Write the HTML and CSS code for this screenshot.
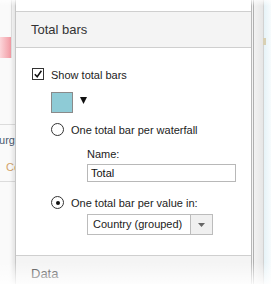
FILE: index.html
```html
<!DOCTYPE html>
<html>
<head>
<meta charset="utf-8">
<link rel="stylesheet" href="styles.css">
</head>
<body>
<div class="screen">
  <div class="backdrop-left">
    <div class="bl-top"><div class="bar-pink"></div></div>
    <div class="bl-row bl-row-1"><span class="bl-text bl-blue">Luxemburg</span></div>
    <div class="bl-row bl-row-2"><span class="bl-text bl-orange">Country</span></div>
  </div>

  <div class="panel">
    <div class="panel-top"></div>
    <div class="section-head">Total bars</div>
    <div class="section-body">
      <div class="check-row">
        <span class="checkbox"><svg width="10" height="10" viewBox="0 0 10 10"><path d="M1.8 5.2 L4.2 7.8 L8.4 1.8" fill="none" stroke="#111" stroke-width="1.5"/></svg></span>
        <span class="label">Show total bars</span>
      </div>
      <div class="swatch-row">
        <span class="swatch"></span>
        <svg class="caret" width="7" height="7" viewBox="0 0 7 7"><path d="M0 0 H7 L3.5 7 Z" fill="#111"/></svg>
      </div>
      <div class="radio-row">
        <span class="radio"></span>
        <span class="label">One total bar per waterfall</span>
      </div>
      <div class="name-label">Name:</div>
      <div class="text-input">Total</div>
      <div class="radio-row radio-row-2">
        <span class="radio radio-checked"><span class="radio-dot"></span></span>
        <span class="label">One total bar per value in:</span>
      </div>
      <div class="select">
        <span class="select-value">Country (grouped)</span>
        <span class="select-btn"><svg width="7" height="4" viewBox="0 0 7 4"><path d="M0 0 H7 L3.5 4 Z" fill="#666"/></svg></span>
      </div>
    </div>
    <div class="section-head section-data">Data</div>
  </div>

  <div class="backdrop-right">
    <div class="br-gap"></div>
    <div class="br-line"></div>
    <div class="br-strip"></div>
    <div class="br-line2"></div>
    <div class="br-blue"><div class="br-handle"></div></div>
  </div>
</div>
</body>
</html>
```
FILE: styles.css
```css
* { box-sizing: border-box; }
html, body { margin: 0; padding: 0; background: #fff; }
body {
  font-family: "Liberation Sans", Arial, sans-serif;
  font-size: 11px;
  color: #222;
}
.screen {
  position: relative;
  display: flex;
  width: 271px;
  height: 284px;
  overflow: hidden;
  background: #fff;
}
.screen::before {
  content: "";
  position: absolute;
  left: 0; right: 0; top: 0;
  height: 6px;
  background: linear-gradient(to bottom, rgba(255,255,255,0.7), rgba(255,255,255,0));
  z-index: 5;
}
.screen::after {
  content: "";
  position: absolute;
  left: 0; right: 0; bottom: 0;
  height: 22px;
  background: linear-gradient(to bottom, rgba(255,255,255,0), rgba(255,255,255,0.85));
  z-index: 5;
}

/* backdrop left */
.backdrop-left {
  flex: none;
  width: 15px;
  display: flex;
  flex-direction: column;
  background: #fafafa;
}
.bl-top {
  width: 12px;
  height: 58px;
  border-right: 1px solid #e2e2e2;
  padding-top: 37px;
}
.bar-pink {
  width: 11px;
  height: 21px;
  background: linear-gradient(to right, #fcd6da, #f29aa3);
}
.bl-row {
  display: flex;
  overflow: hidden;
  white-space: nowrap;
  line-height: 14px;
}
.bl-row-1 {
  margin-top: 66px;
  border-top: 1px solid #dcdcdc;
  padding-top: 8px;
  justify-content: flex-end;
}
.bl-row-2 {
  margin-top: 13px;
  padding-left: 6px;
  padding-bottom: 7px;
  border-bottom: 1px solid #dcdcdc;
}
.bl-blue { color: #4a5a70; }
.bl-orange { color: #d2a36a; }

/* panel */
.panel {
  position: relative;
  z-index: 2;
  flex: none;
  width: 237px;
  height: 284px;
  display: flex;
  flex-direction: column;
  background: #fff;
  border-left: 1px solid #c6c6c6;
  border-right: 1px solid #b8b8b8;
  box-shadow: -3px 0 3px rgba(0,0,0,0.08);
}
.panel-top { height: 11px; flex: none; }
.section-head {
  flex: none;
  height: 37px;
  border-top: 1px solid #cfcfcf;
  border-bottom: 1px solid #cfcfcf;
  background: #f4f4f4;
  padding-left: 15px;
  font-size: 13px;
  line-height: 35px;
  color: #333;
}
.section-data {
  height: 29px;
  border-bottom: none;
}
.section-body {
  flex: 1;
  padding: 20px 0 0 16px;
  display: flex;
  flex-direction: column;
  align-items: flex-start;
}
.label { line-height: 14px; white-space: nowrap; }
.check-row {
  display: flex;
  align-items: flex-start;
  gap: 7px;
  line-height: 14px;
}
.checkbox {
  width: 12px;
  height: 12px;
  border: 1px solid #333;
  background: #fff;
  display: flex;
  align-items: center;
  justify-content: center;
}
.checkbox svg { display: block; }
.swatch-row {
  display: flex;
  align-items: flex-start;
  gap: 7px;
  margin: 10px 0 0 19px;
}
.swatch {
  width: 22px;
  height: 21px;
  border: 1px solid #8a8a8a;
  background: #8ecbd6;
}
.caret { display: block; margin-top: 5px; }
.radio-row {
  display: flex;
  align-items: flex-start;
  gap: 7px;
  margin: 10px 0 0 19px;
  line-height: 14px;
}
.radio {
  width: 13px;
  height: 13px;
  border: 1px solid #333;
  border-radius: 50%;
  background: #fff;
  display: flex;
  align-items: center;
  justify-content: center;
}
.radio-dot {
  width: 4px;
  height: 4px;
  border-radius: 50%;
  background: #111;
}
.radio-row-2 { margin-top: 14px; }
.name-label {
  margin: 10px 0 0 55px;
  line-height: 14px;
}
.text-input {
  margin: 3px 0 0 55px;
  width: 149px;
  height: 18px;
  border: 1px solid #b8b8b8;
  padding-left: 3px;
  line-height: 16px;
  color: #111;
}
.select {
  margin: 4px 0 0 55px;
  width: 126px;
  height: 21px;
  border: 1px solid #bcbcbc;
  display: flex;
  background: #fff;
}
.select-value {
  flex: 1;
  padding-left: 5px;
  line-height: 19px;
  white-space: nowrap;
}
.select-btn {
  flex: none;
  width: 22px;
  border-left: 1px solid #bcbcbc;
  background: #f0f0f0;
  display: flex;
  align-items: center;
  justify-content: center;
}
.select-btn svg { display: block; }

/* backdrop right */
.backdrop-right {
  flex: 1;
  display: flex;
}
.br-gap { width: 1px; background: #f4f4f4; }
.br-line { width: 1px; background: #b0b0b0; }
.br-strip { width: 9px; background: linear-gradient(to right, #f2f2f2, #e6e6e6); }
.br-line2 { width: 1px; background: #d2d2d2; }
.br-blue {
  flex: 1;
  background: linear-gradient(to right, #e6f3f8, #f7fbfd);
}
.br-handle {
  margin-top: 38px;
  margin-left: -1px;
  width: 3px;
  height: 7px;
  background: #d8d0b4;
}
```
